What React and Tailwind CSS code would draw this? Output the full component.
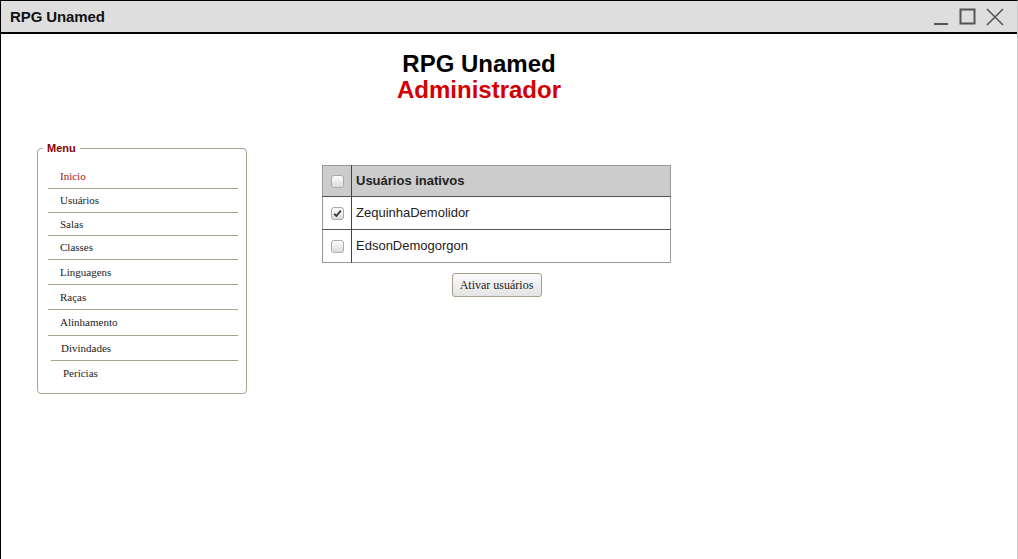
import React from "react";

const MENU = [
  { label: "Inicio", active: true, h: "h-[24px]", shift: "" },
  { label: "Usuários", h: "h-[24px]", shift: "" },
  { label: "Salas", h: "h-[23px]", shift: "" },
  { label: "Classes", h: "h-[24px]", shift: "" },
  { label: "Linguagens", h: "h-[25px]", shift: "" },
  { label: "Raças", h: "h-[25px]", shift: "" },
  { label: "Alinhamento", h: "h-[26px]", shift: "" },
  { label: "Divindades", h: "h-[25px]", shift: "ml-[3px] pl-[10px]" },
  { label: "Perícias", h: "h-[24px]", shift: "ml-[3px] pl-[12px]", last: true },
];

const USERS = [
  { name: "ZequinhaDemolidor", checked: true },
  { name: "EdsonDemogorgon", checked: false },
];

function Check({ checked }) {
  return (
    <span className="flex items-center justify-center w-[13px] h-[13px] rounded-[3px] border border-[#a9a9a9] bg-gradient-to-b from-[#fdfdfd] to-[#dcdcdc]">
      {checked && (
        <svg width="9" height="9" viewBox="0 0 9 9">
          <path d="M1.2 4.8 L3.4 7 L7.8 1.6" fill="none" stroke="#333" strokeWidth="1.8" />
        </svg>
      )}
    </span>
  );
}

export default function App() {
  return (
    <div className="w-[1018px] h-[559px] bg-white border-l border-t border-black border-r border-r-[#c8c8c8] flex flex-col overflow-hidden" style={{ fontFamily: "'Liberation Sans', Arial, sans-serif" }}>
      {/* barra de título */}
      <div className="h-[33px] shrink-0 bg-[#dedede] border-b-2 border-black flex items-center pl-[9px] pr-[13px]">
        <span className="text-[15px] font-bold text-[#111] tracking-[-0.1px] mt-[2px]">RPG Unamed</span>
        <div className="ml-auto flex items-center gap-[10px] text-[#555]">
          <svg width="16" height="18" viewBox="0 0 16 18">
            <path d="M1 16 H15" stroke="#555" strokeWidth="2" />
          </svg>
          <svg width="17" height="18" viewBox="0 0 17 18">
            <rect x="1.5" y="1.5" width="14" height="14" fill="none" stroke="#555" strokeWidth="2" />
          </svg>
          <svg width="18" height="18" viewBox="0 0 18 18">
            <path d="M1 1 L17 17 M17 1 L1 17" stroke="#555" strokeWidth="1.6" />
          </svg>
        </div>
      </div>

      {/* cabeçalho */}
      <div className="pt-[17px] pr-[60px] flex flex-col items-center leading-[26px]">
        <h1 className="text-[24px] font-bold text-black">RPG Unamed</h1>
        <h2 className="text-[24px] font-bold text-[#d40000]">Administrador</h2>
      </div>

      <div className="flex items-start mt-[39px]">
        {/* menu */}
        <fieldset className="ml-[36px] w-[210px] h-[252px] border border-[#a8a48e] rounded-[4px] pl-[10px] pr-[8px] pt-[11px]">
          <legend className="-ml-[5px] px-[4px] text-[11px] font-bold text-[#8b0000] leading-[12px]">Menu</legend>
          <ul style={{ fontFamily: "'Liberation Serif', 'Times New Roman', serif" }}>
            {MENU.map((m) => (
              <li
                key={m.label}
                className={`${m.h} flex items-center text-[11px] ${m.shift || "pl-[12px]"} ${m.last ? "" : "border-b border-[#a8a48e]"} ${m.active ? "text-[#a01010]" : "text-[#222]"}`}
              >
                {m.label}
              </li>
            ))}
          </ul>
        </fieldset>

        {/* usuários inativos */}
        <div className="ml-[75px] mt-[23px] flex flex-col items-center">
          <table className="w-[349px] border-collapse border border-[#9a9a9a] text-[13px]">
            <thead>
              <tr className="h-[31px] bg-[#cccccc] border-b border-[#555]">
                <th className="w-[29px] border-r border-[#444]">
                  <div className="flex justify-center"><Check /></div>
                </th>
                <th className="text-left pl-[4px] font-bold text-[#222]">Usuários inativos</th>
              </tr>
            </thead>
            <tbody>
              {USERS.map((u, i) => (
                <tr key={u.name} className={`h-[33px] ${i === 0 ? "border-b border-[#555]" : ""}`}>
                  <td className="border-r border-[#444]">
                    <div className="flex justify-center"><Check checked={u.checked} /></div>
                  </td>
                  <td className="pl-[4px] text-[#222]">{u.name}</td>
                </tr>
              ))}
            </tbody>
          </table>
          <button
            className="mt-[10px] w-[90px] h-[24px] rounded-[3px] border border-[#a89f8a] bg-gradient-to-b from-[#fbfbfb] to-[#e4e4e4] text-[12px] text-[#222]"
            style={{ fontFamily: "'Liberation Serif', 'Times New Roman', serif" }}
          >
            Ativar usuários
          </button>
        </div>
      </div>
    </div>
  );
}
